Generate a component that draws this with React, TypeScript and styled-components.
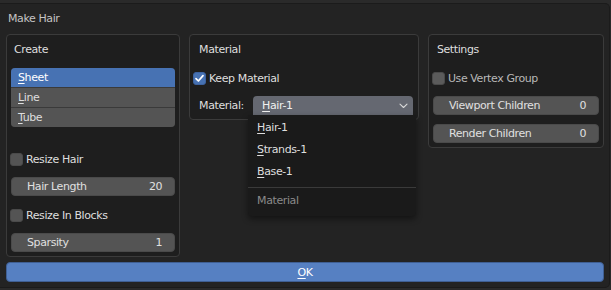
import React from "react";
import styled, { createGlobalStyle } from "styled-components";

const GlobalStyle = createGlobalStyle`
  html, body { margin: 0; padding: 0; }
  body {
    background: #2a2a2a;
    font-family: "DejaVu Sans", "Liberation Sans", sans-serif;
    font-size: 11px;
    letter-spacing: -0.4px;
    color: #dcdcdc;
    width: 611px;
    height: 290px;
    overflow: hidden;
  }
`;

const Page = styled.div`
  width: 611px;
  height: 290px;
  padding-top: 3px;
  box-sizing: border-box;
`;

const Dialog = styled.div`
  width: 610px;
  height: 285px;
  box-sizing: border-box;
  background: #232323;
  border-radius: 0 5px 5px 0;
  border: 1px solid #1b1b1b;
  border-left: none;
  padding: 0 5px 0 6px;
  display: flex;
  flex-direction: column;
`;

const Title = styled.div`
  height: 30px;
  line-height: 29px;
  padding-left: 2px;
  color: #c4c4c4;
`;

const Columns = styled.div`
  display: flex;
  align-items: flex-start;
  gap: 9px;
`;

const Panel = styled.div<{ $w: number }>`
  position: relative;
  width: ${(p) => p.$w}px;
  box-sizing: border-box;
  border: 1px solid #3b3b3b;
  border-radius: 4px;
  background: #1e1e1e;
  padding: 4px;
  display: flex;
  flex-direction: column;
`;

const Header = styled.div<{ $indent: number }>`
  height: 21px;
  line-height: 22px;
  padding-left: ${(p) => p.$indent}px;
  color: #dedede;
`;

const List = styled.div`
  margin-top: 8px;
  display: flex;
  flex-direction: column;
  gap: 1px;
  background: #3a3a3a;
  border-radius: 4px;
  overflow: hidden;
`;

const ListRow = styled.div<{ $active?: boolean }>`
  height: 19px;
  line-height: 19px;
  padding-left: 7px;
  background: ${(p) => (p.$active ? "#4772b3" : "#545454")};
  color: ${(p) => (p.$active ? "#ffffff" : "#dedede")};
`;

const Key = styled.span`
  text-decoration: underline;
  text-underline-offset: 2px;
  text-decoration-thickness: 1px;
`;

const CheckRow = styled.div<{ $mt: number; $disabled?: boolean }>`
  margin-top: ${(p) => p.$mt}px;
  height: 20px;
  display: flex;
  align-items: center;
  gap: 3px;
  margin-left: -1px;
  color: ${(p) => (p.$disabled ? "#b8b8b8" : "#dedede")};
`;

const Box = styled.div<{ $checked?: boolean; $disabled?: boolean }>`
  width: 13px;
  height: 13px;
  box-sizing: border-box;
  border-radius: 3px;
  background: ${(p) =>
    p.$checked ? "#4772b3" : p.$disabled ? "#5b5b5b" : "#545454"};
  border: 1px solid ${(p) => (p.$checked ? "#3d63a0" : "#4a4a4a")};
  display: flex;
  align-items: center;
  justify-content: center;
`;

const Field = styled.div<{ $mt: number }>`
  margin-top: ${(p) => p.$mt}px;
  height: 19px;
  box-sizing: border-box;
  border-radius: 4px;
  background: #545454;
  border: 1px solid #4a4a4a;
  display: flex;
  align-items: center;
  justify-content: space-between;
  padding: 0 12px 0 15px;
  color: #e0e0e0;
`;

const SelectRow = styled.div`
  margin-top: 8px;
  height: 19px;
  display: flex;
  align-items: center;
  position: relative;
`;

const SelectLabel = styled.div`
  width: 54px;
  padding-left: 5px;
  color: #dedede;
`;

const Select = styled.div`
  flex: 1;
  margin-right: 1px;
  height: 19px;
  box-sizing: border-box;
  background: #656871;
  border-radius: 4px 4px 0 0;
  display: flex;
  align-items: center;
  justify-content: space-between;
  padding: 0 5px 0 9px;
  color: #f0f0f0;
`;

const Menu = styled.div`
  position: absolute;
  top: 19px;
  left: 54px;
  right: -2px;
  background: #1a1a1a;
  border-radius: 0 0 4px 4px;
  box-shadow: 0 3px 6px rgba(0, 0, 0, 0.45);
  padding: 2px 0 5px;
  z-index: 2;
`;

const MenuItem = styled.div`
  height: 22px;
  line-height: 22px;
  padding-left: 9px;
  color: #dedede;
`;

const MenuSep = styled.div`
  height: 1px;
  background: #3a3a3a;
  margin: 4px 0 3px;
`;

const MenuTitle = styled.div`
  height: 20px;
  line-height: 20px;
  padding-left: 9px;
  color: #8a8a8a;
`;

const OkButton = styled.div`
  margin-top: 5px;
  height: 20px;
  box-sizing: border-box;
  background: #5680c2;
  border: 1px solid #3f5f93;
  border-radius: 4px;
  display: flex;
  align-items: center;
  justify-content: center;
  color: #ffffff;
`;

const Check = () => (
  <svg width="11" height="11" viewBox="0 0 11 11">
    <path
      d="M2 5.6 L4.4 8 L9 2.6"
      fill="none"
      stroke="#ffffff"
      strokeWidth="1.7"
      strokeLinecap="round"
      strokeLinejoin="round"
    />
  </svg>
);

const Chevron = () => (
  <svg width="9" height="6" viewBox="0 0 9 6">
    <path
      d="M1 1.2 L4.5 4.5 L8 1.2"
      fill="none"
      stroke="#d8d8d8"
      strokeWidth="1.1"
      strokeLinecap="round"
      strokeLinejoin="round"
    />
  </svg>
);

const U = ({ t }: { t: string }) => (
  <>
    <Key>{t[0]}</Key>
    {t.slice(1)}
  </>
);

export default function App() {
  return (
    <>
      <GlobalStyle />
      <Page>
        <Dialog>
          <Title>Make Hair</Title>
          <Columns>
            <Panel $w={175}>
              <Header $indent={3}>Create</Header>
              <List>
                <ListRow $active>
                  <U t="Sheet" />
                </ListRow>
                <ListRow>
                  <U t="Line" />
                </ListRow>
                <ListRow>
                  <U t="Tube" />
                </ListRow>
              </List>
              <CheckRow $mt={22}>
                <Box />
                Resize Hair
              </CheckRow>
              <Field $mt={8}>
                <span>Hair Length</span>
                <span>20</span>
              </Field>
              <CheckRow $mt={9}>
                <Box />
                Resize In Blocks
              </CheckRow>
              <Field $mt={8}>
                <span>Sparsity</span>
                <span>1</span>
              </Field>
            </Panel>
            <Panel $w={231}>
              <Header $indent={5}>Material</Header>
              <CheckRow $mt={8}>
                <Box $checked>
                  <Check />
                </Box>
                Keep Material
              </CheckRow>
              <SelectRow>
                <SelectLabel>Material:</SelectLabel>
                <Select>
                  <span>
                    <U t="Hair-1" />
                  </span>
                  <Chevron />
                </Select>
                <Menu>
                  <MenuItem>
                    <U t="Hair-1" />
                  </MenuItem>
                  <MenuItem>
                    <U t="Strands-1" />
                  </MenuItem>
                  <MenuItem>
                    <U t="Base-1" />
                  </MenuItem>
                  <MenuSep />
                  <MenuTitle>Material</MenuTitle>
                </Menu>
              </SelectRow>
            </Panel>
            <Panel $w={177}>
              <Header $indent={4}>Settings</Header>
              <CheckRow $mt={8} $disabled>
                <Box $disabled />
                Use Vertex Group
              </CheckRow>
              <Field $mt={8}>
                <span>Viewport Children</span>
                <span>0</span>
              </Field>
              <Field $mt={9}>
                <span>Render Children</span>
                <span>0</span>
              </Field>
            </Panel>
          </Columns>
          <OkButton>
            <U t="OK" />
          </OkButton>
        </Dialog>
      </Page>
    </>
  );
}
